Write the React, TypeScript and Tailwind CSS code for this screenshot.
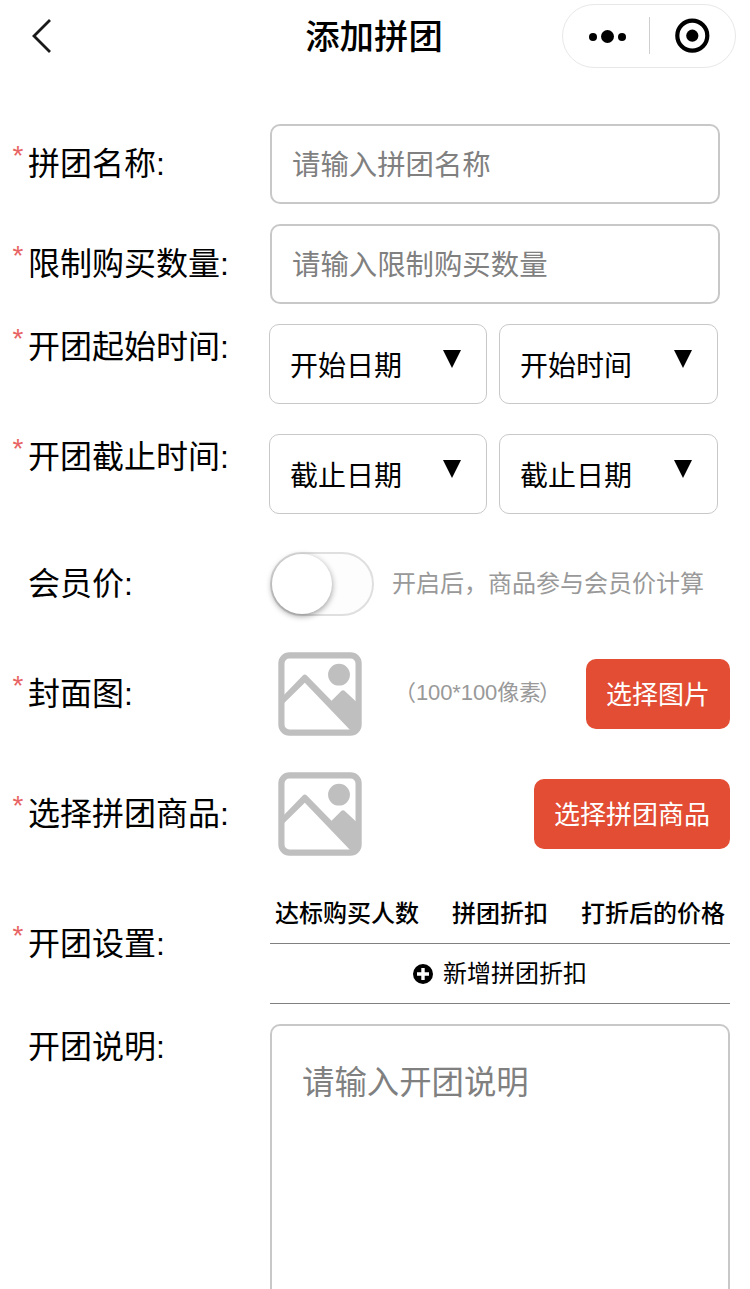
import { useState } from "react"
import type { ReactNode } from "react"

type RowProps = {
  label: string
  required?: boolean
  className?: string
  labelClass?: string
  children: ReactNode
}

function Row({ label, required = true, className = "", labelClass = "self-center", children }: RowProps) {
  return (
    <div className={`flex items-center ${className}`}>
      <div className={`flex w-[270px] shrink-0 pl-3 leading-[46px] ${labelClass}`}>
        <span className="w-4 pl-[0.5px] text-[28px] leading-[30px] text-[#e86464]">{required ? "*" : ""}</span>
        <span className="text-[32px]">{label}</span>
      </div>
      {children}
    </div>
  )
}

function SelectBox({ text }: { text: string }) {
  return (
    <button className="flex h-20 flex-1 items-center justify-between rounded-[10px] border border-[#c8c8c8] pl-5 pr-[25px] text-[28px]">
      <span className="pt-1.5">{text}</span>
      <svg width="18" height="18" viewBox="0 0 18 18" className="mb-[10px]">
        <path d="M0 0h18L9 18z" fill="#000" />
      </svg>
    </button>
  )
}

function ImagePlaceholder() {
  return (
    <svg width="84" height="84" viewBox="0 0 84 84" className="ml-2 shrink-0">
      <rect x="3.4" y="3.4" width="77.2" height="77.2" rx="8" fill="none" stroke="#bfbfbf" strokeWidth="6.2" />
      <circle cx="61" cy="22.7" r="10.9" fill="#bfbfbf" />
      <path
        d="M5.7 43.3 24.8 23.6q2-2 4 0L53.5 48.7 63 39.2q2-2 4 0L78 49.5V80H74L26.8 30.8 5.7 51.6z"
        fill="#bfbfbf"
      />
    </svg>
  )
}

export default function App() {
  const [memberPrice, setMemberPrice] = useState(false)

  return (
    <div className="h-[1289px] w-[750px] overflow-hidden bg-white font-['Liberation_Sans','Noto_Sans_CJK_SC',sans-serif] text-black">
      <header className="grid h-[72px] grid-cols-3 items-center">
        <svg width="24" height="36" viewBox="0 0 24 36" className="ml-[30px]">
          <path d="M20 2 4 18l16 16" fill="none" stroke="#1a1a1a" strokeWidth="2.8" />
        </svg>
        <h1 className="whitespace-nowrap pr-0.5 pt-0.5 text-center text-[34.4px] font-medium leading-[48px]">添加拼团</h1>
        <div className="mr-[14px] flex h-16 w-[174px] items-center justify-self-end rounded-full border border-[#e8e8e8]">
          <svg width="86" height="62" viewBox="0 0 86 62">
            <circle cx="30" cy="32" r="4" />
            <circle cx="44.5" cy="31.5" r="6.5" />
            <circle cx="59" cy="32" r="4" />
          </svg>
          <div className="mb-px h-[37px] w-px bg-[#cfcfcf]" />
          <svg width="85" height="62" viewBox="0 0 85 62">
            <circle cx="42.3" cy="30.7" r="15" fill="none" stroke="#000" strokeWidth="4.2" />
            <circle cx="42.3" cy="30.7" r="6.1" />
          </svg>
        </div>
      </header>

      <main className="pt-[52px]">
        <Row label="拼团名称:">
          <input
            placeholder="请输入拼团名称"
            className="h-20 w-[450px] rounded-[10px] border-2 border-[#c8c8c8] px-5 pt-0.5 text-[28.4px] outline-none placeholder:text-[#808080]"
          />
        </Row>
        <Row label="限制购买数量:" className="mt-5">
          <input
            placeholder="请输入限制购买数量"
            className="h-20 w-[450px] rounded-[10px] border-2 border-[#c8c8c8] px-5 pt-0.5 text-[28.4px] outline-none placeholder:text-[#808080]"
          />
        </Row>
        <Row label="开团起始时间:" className="mt-5" labelClass="self-start">
          <div className="-ml-px grid w-[449px] grid-cols-[218px_219px] gap-3">
            <SelectBox text="开始日期" />
            <SelectBox text="开始时间" />
          </div>
        </Row>
        <Row label="开团截止时间:" className="mt-[30px]" labelClass="self-start">
          <div className="-ml-px grid w-[449px] grid-cols-[218px_219px] gap-3">
            <SelectBox text="截止日期" />
            <SelectBox text="截止日期" />
          </div>
        </Row>
        <Row label="会员价:" required={false} className="mt-[38px] h-16">
          <button
            onClick={() => setMemberPrice(!memberPrice)}
            className={`flex h-16 w-[104px] rounded-full border-2 border-[#dfdfdf] ${memberPrice ? "justify-end bg-[#e24d34]" : "bg-[#fdfdfd]"}`}
          >
            <span className="size-[60px] rounded-full bg-white shadow-[0_2px_6px_rgba(0,0,0,0.4)]" />
          </button>
          <span className="ml-[18px] text-2xl text-[#999]">开启后，商品参与会员价计算</span>
        </Row>
        <Row label="封面图:" className="mt-[18px] h-[120px] pr-5">
          <ImagePlaceholder />
          <span className="ml-8 whitespace-nowrap pb-1 text-[22px] tracking-[-0.1px] text-[#999]">
            （100*100像素<span className="-ml-0.5">）</span>
          </span>
          <button className="ml-auto h-[70px] shrink-0 rounded-[10px] bg-[#e24d34] px-5 pt-0.5 text-[26px] text-white">选择图片</button>
        </Row>
        <Row label="选择拼团商品:" className="h-[120px] pr-5">
          <ImagePlaceholder />
          <button className="ml-auto h-[70px] shrink-0 rounded-[10px] bg-[#e24d34] px-5 pt-0.5 text-[26px] text-white">选择拼团商品</button>
        </Row>
        <Row label="开团设置:" className="mt-[10px] h-[120px]">
          <div className="w-[460px] text-2xl">
            <div className="flex h-[60px] items-center justify-between border-b border-[#808080] px-[5px] pt-px font-medium">
              <span>达标购买人数</span>
              <span>拼团折扣</span>
              <span>打折后的价格</span>
            </div>
            <button className="flex h-[60px] w-full items-center justify-center gap-[10px] border-b border-[#808080]">
              <svg width="20" height="20" viewBox="0 0 20 20">
                <circle cx="10" cy="10" r="10" />
                <path d="M10 4v12M4 10h12" stroke="#fff" strokeWidth="3.4" />
              </svg>
              新增拼团折扣
            </button>
          </div>
        </Row>
        <Row label="开团说明:" required={false} className="mt-5" labelClass="self-start">
          <textarea
            placeholder="请输入开团说明"
            className="h-[320px] w-[460px] resize-none rounded-[10px] border-2 border-[#c8c8c8] px-[30px] py-[33px] text-[32.4px] leading-[48px] outline-none placeholder:text-[#808080]"
          />
        </Row>
      </main>
    </div>
  )
}
